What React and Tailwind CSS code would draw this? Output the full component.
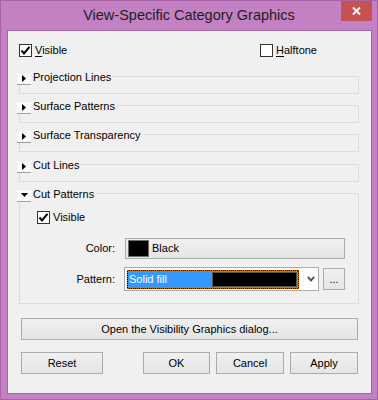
import React from 'react';

const FONT = { fontFamily: '"Liberation Sans", Arial, sans-serif' };

function Check({ checked }) {
  return (
    <span className="flex h-[13px] w-[13px] shrink-0 items-center justify-center border border-[#333333] bg-white">
      {checked && (
        <svg width="11" height="11" viewBox="0 0 11 11">
          <polyline points="1.5,5.5 4,8.5 9.5,1.8" fill="none" stroke="#000" strokeWidth="2" />
        </svg>
      )}
    </span>
  );
}

function Expander({ open }) {
  return (
    <span className="flex h-[12px] w-[14px] shrink-0 items-center justify-center border-b border-[#a0a0a0] bg-[#f9f9f9]">
      {open ? (
        <svg width="7" height="4" viewBox="0 0 7 4" className="-mt-px">
          <polygon points="0,0 7,0 3.5,4" fill="#000" />
        </svg>
      ) : (
        <svg width="4" height="7" viewBox="0 0 4 7" className="-ml-px">
          <polygon points="0,0 4,3.5 0,7" fill="#000" />
        </svg>
      )}
    </span>
  );
}

// group box with the expander header sitting over its top border
function Section({ title, open, className = '', children }) {
  return (
    <div className={`relative ml-[11px] w-[340px] border border-[#dcdcdc] ${className}`}>
      <div className="absolute -left-[3px] -top-[4px] flex items-start bg-[#f0f0f0] pr-[2px]">
        <Expander open={open} />
        <span className="-mt-[3px] ml-[2px] text-[11px] leading-[15px] text-black">{title}</span>
      </div>
      {children}
    </div>
  );
}

function Btn({ children, className = '' }) {
  return (
    <button
      className={`flex h-[22px] items-center justify-center border border-[#acacac] bg-gradient-to-b from-[#f0f0f0] to-[#e5e5e5] text-[11px] text-black ${className}`}
    >
      {children}
    </button>
  );
}

export default function App() {
  return (
    <div style={FONT} className="flex h-[400px] w-[378px] flex-col border border-[#a862a8] bg-[#c380c3]">
      {/* title bar */}
      <div className="relative flex h-[29px] shrink-0 items-start justify-center">
        <span className="mt-[5px] text-[14.5px] leading-[18px] text-[#1e1e1e]">View-Specific Category Graphics</span>
        <div className="absolute right-[5px] top-0 flex h-[20px] w-[31px] items-center justify-center bg-[#c75050]">
          <svg width="9" height="8" viewBox="0 0 9 8">
            <path d="M1 0.5 L8 7.5 M8 0.5 L1 7.5" stroke="#fff" strokeWidth="2" />
          </svg>
        </div>
      </div>

      {/* client area */}
      <div className="ml-[6px] flex h-[364px] w-[365px] flex-col border border-[#a468a4] bg-[#f0f0f0] text-[11px] text-black">
        <div className="mt-[13px] flex h-[13px] items-center">
          <div className="ml-[11px] flex w-[241px] items-center">
            <Check checked />
            <span className="ml-[3px] leading-[13px]">
              <span className="underline underline-offset-2">V</span>isible
            </span>
          </div>
          <div className="flex items-center">
            <Check />
            <span className="ml-[3px] leading-[13px]">
              <span className="underline underline-offset-2">H</span>alftone
            </span>
          </div>
        </div>

        <Section title="Projection Lines" className="mt-[19px] h-[18px]" />
        <Section title="Surface Patterns" className="mt-[11px] h-[18px]" />
        <Section title="Surface Transparency" className="mt-[11px] h-[18px]" />
        <Section title="Cut Lines" className="mt-[12px] h-[18px]" />
        <Section title="Cut Patterns" open className="mt-[11px] h-[111px]">
          <div className="ml-[17px] mt-[17px] flex items-center">
            <Check checked />
            <span className="ml-[3px] leading-[13px]">Visible</span>
          </div>
          <div className="mt-[14px] flex items-center">
            <span className="w-[95px] text-right">Color:</span>
            <button className="ml-[10px] flex h-[21px] w-[220px] items-center border border-[#acacac] bg-gradient-to-b from-[#f0f0f0] to-[#e5e5e5] pl-[2px]">
              <span className="h-[17px] w-[21px] border border-[#6d6d6d] bg-black" />
              <span className="ml-[3px]">Black</span>
            </button>
          </div>
          <div className="mt-[8px] flex items-center">
            <span className="w-[95px] text-right">Pattern:</span>
            <div className="ml-[9px] flex h-[24px] w-[195px] items-center border border-[#acacac] bg-white pl-[2px]">
              <div className="bg-black">
                <div className="flex h-[19px] w-[172px] items-center border border-dotted border-[#cc6600] bg-[#3399ff] bg-clip-padding pr-px">
                  <span className="ml-[1px] flex-1 text-white">Solid fill</span>
                  <span className="h-[15px] w-[85px] border border-[#555555] bg-black" />
                </div>
              </div>
              <svg width="8" height="6" viewBox="0 0 8 6" className="ml-[8px]">
                <polyline points="0.8,0.8 4,4.5 7.2,0.8" fill="none" stroke="#5a5a5a" strokeWidth="2" />
              </svg>
            </div>
            <Btn className="ml-[4px] h-[21px] w-[22px]">...</Btn>
          </div>
        </Section>

        <Btn className="ml-[13px] mt-[14px] w-[337px]">Open the Visibility Graphics dialog...</Btn>

        <div className="ml-[13px] mt-[12px] flex">
          <Btn className="w-[82px]">Reset</Btn>
          <Btn className="ml-[40px] w-[67px] border-[#3399ff]">OK</Btn>
          <Btn className="ml-[6px] w-[68px]">Cancel</Btn>
          <Btn className="ml-[6px] w-[68px]">Apply</Btn>
        </div>
      </div>
    </div>
  );
}
